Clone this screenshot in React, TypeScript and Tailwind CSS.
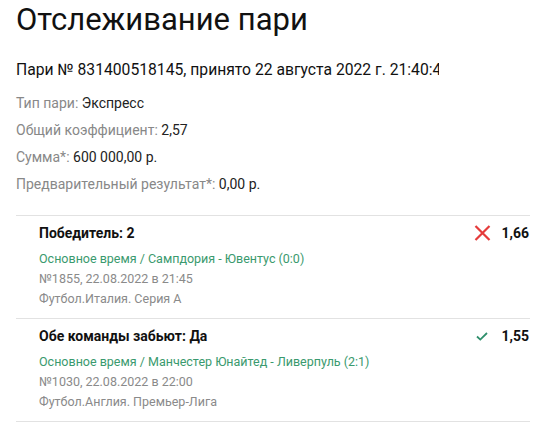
import React from "react";

const font = { fontFamily: "Roboto, 'Noto Sans', sans-serif" };

function XIcon() {
  return (
    <svg width="17" height="16" viewBox="0 0 17 16" className="block">
      <path d="M1.5 1 L15.5 15 M15.5 1 L1.5 15" stroke="#e53b3b" strokeWidth="2.2" strokeLinecap="butt" fill="none" />
    </svg>
  );
}

function CheckIcon() {
  return (
    <svg width="12" height="9" viewBox="0 0 12 9" className="block">
      <path d="M1 4.5 L4.3 7.6 L11 1" stroke="#2f8f6c" strokeWidth="1.8" fill="none" />
    </svg>
  );
}

function Info({ label, value }: { label: string; value: string }) {
  return (
    <div className="text-[14px] leading-[27px]">
      <span className="text-[#888888]">{label} </span>
      <span className="text-[#222222]">{value}</span>
    </div>
  );
}

function Event({
  title,
  match,
  num,
  league,
  odd,
  won,
}: {
  title: string;
  match: string;
  num: string;
  league: string;
  odd: string;
  won: boolean;
}) {
  return (
    <div className="border-t border-[#e2e2e2] pl-[23px] pr-[1px] pt-[7px] pb-[9px] flex">
      <div className="flex-1">
        <div className="text-[14px] leading-[20px] font-bold text-[#111111]">{title}</div>
        <div className="mt-[6px] text-[12.5px] leading-[20px] text-[#3a9a6e]">{match}</div>
        <div className="text-[12.5px] leading-[20px] text-[#8a8a8a]">{num}</div>
        <div className="text-[12.5px] leading-[20px] text-[#8a8a8a]">{league}</div>
      </div>
      <div className="flex items-start h-[20px]">
        <div className="w-[30px] h-[20px] flex items-center justify-center mr-[4px]">
          {won ? <CheckIcon /> : <XIcon />}
        </div>
        <div className="text-[14px] leading-[20px] font-bold text-[#111111]">{odd}</div>
      </div>
    </div>
  );
}

export default function App() {
  return (
    <div className="w-[550px] h-[426px] bg-white overflow-hidden" style={font}>
      <div className="pl-[16px] w-[530px]">
        <h1 className="text-[31px] leading-[40px] text-[#111111] font-normal">Отслеживание пари</h1>
        <div className="mt-[18px] w-[423px] overflow-hidden whitespace-nowrap text-[15.7px] leading-[24px] text-[#111111]">
          Пари № 831400518145, принято 22 августа 2022 г. 21:40:47
        </div>
        <div className="mt-[8px]">
          <Info label="Тип пари:" value="Экспресс" />
          <Info label="Общий коэффициент:" value="2,57" />
          <Info label="Сумма*:" value="600 000,00 р." />
          <Info label="Предварительный результат*:" value="0,00 р." />
        </div>
        <div className="mt-[17px]">
          <Event
            title="Победитель: 2"
            match="Основное время / Сампдория - Ювентус (0:0)"
            num="№1855, 22.08.2022 в 21:45"
            league="Футбол.Италия. Серия А"
            odd="1,66"
            won={false}
          />
          <Event
            title="Обе команды забьют: Да"
            match="Основное время / Манчестер Юнайтед - Ливерпуль (2:1)"
            num="№1030, 22.08.2022 в 22:00"
            league="Футбол.Англия. Премьер-Лига"
            odd="1,55"
            won={true}
          />
          <div className="border-t border-[#e2e2e2]" />
        </div>
      </div>
    </div>
  );
}
